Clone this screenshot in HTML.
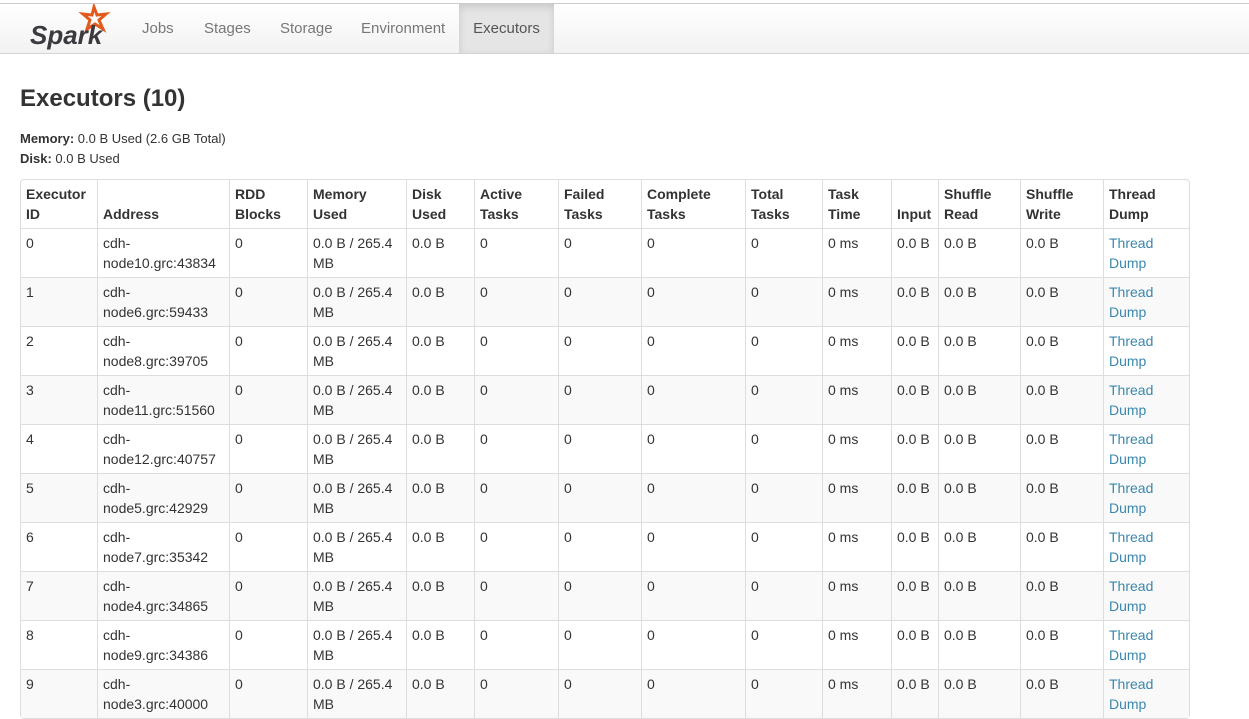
<!DOCTYPE html>
<html><head><meta charset="utf-8"><style>
body{margin:0;font-family:"Liberation Sans",Arial,sans-serif;font-size:14px;line-height:20px;color:#333;background:#fff;width:1249px;height:672px;overflow:hidden}
.top{height:3px;background:#fff;border-bottom:1px solid #ccc}
.nav{position:absolute;top:4px;left:0;width:1249px;height:49px;background:linear-gradient(#fff,#f2f2f2);border-bottom:1px solid #d4d4d4}
.nav a{position:absolute;top:1px;height:48px;line-height:48px;color:#777;font-size:15px;text-decoration:none}
.nav .act{top:0;height:49px;line-height:50px;background:#e5e5e5;box-shadow:inset 0 3px 8px rgba(0,0,0,.125);color:#555;text-align:center}
h3{position:absolute;left:20px;top:83px;margin:0;font-size:24px;line-height:32px;font-weight:bold}
.info{position:absolute;left:20px;top:129px;font-size:13px;line-height:20px}
table{position:absolute;left:20px;top:179px;border-collapse:separate;border-spacing:0;table-layout:fixed;width:1168px;border:1px solid #ddd;border-radius:4px}
th,td{padding:4px 5px 4px 5px;border-left:1px solid #ddd;text-align:left;vertical-align:top;overflow:hidden}
th:first-child,td:first-child{border-left:0}
th{vertical-align:bottom;font-weight:bold;height:40px;padding-top:4px;padding-bottom:4px}
td{border-top:1px solid #ddd;height:40px;padding-top:4px}
tr:nth-child(odd) td{background:#f9f9f9}
a.l{color:#3a87ad;text-decoration:none}
</style></head><body>
<div class="top"></div>
<div class="nav">
<svg style="position:absolute;left:28px;top:0px" width="84" height="46" viewBox="0 0 84 46"><path d="M66 3 L69 11 L78 10 L71 16 L75 25 L67 20 L59 25 L62 16 L55 10 L64 11 Z" fill="none" stroke="#e25a1c" stroke-width="3"/><text x="2" y="40" font-family="Liberation Sans,sans-serif" font-style="italic" font-weight="bold" font-size="26" fill="#3c3a3e">Spark</text></svg>
<a style="left:142px">Jobs</a><a style="left:204px">Stages</a><a style="left:280px">Storage</a><a style="left:361px">Environment</a><a class="act" style="left:459px;width:95px">Executors</a>
</div>
<h3>Executors (10)</h3>
<div class="info"><b>Memory:</b> 0.0 B Used (2.6 GB Total)<br><b>Disk:</b> 0.0 B Used</div>
<table>
<colgroup><col style="width:76px"><col style="width:132px"><col style="width:78px"><col style="width:99px"><col style="width:68px"><col style="width:84px"><col style="width:83px"><col style="width:104px"><col style="width:77px"><col style="width:69px"><col style="width:47px"><col style="width:82px"><col style="width:83px"><col style="width:86px"></colgroup>
<tr><th>Executor ID</th><th>Address</th><th>RDD Blocks</th><th>Memory Used</th><th>Disk Used</th><th>Active Tasks</th><th>Failed Tasks</th><th>Complete Tasks</th><th>Total Tasks</th><th>Task Time</th><th>Input</th><th>Shuffle Read</th><th>Shuffle Write</th><th>Thread Dump</th></tr>
<tr><td>0</td><td>cdh-<br>node10.grc:43834</td><td>0</td><td>0.0 B / 265.4 MB</td><td>0.0 B</td><td>0</td><td>0</td><td>0</td><td>0</td><td>0 ms</td><td>0.0 B</td><td>0.0 B</td><td>0.0 B</td><td><a class="l">Thread Dump</a></td></tr>
<tr><td>1</td><td>cdh-<br>node6.grc:59433</td><td>0</td><td>0.0 B / 265.4 MB</td><td>0.0 B</td><td>0</td><td>0</td><td>0</td><td>0</td><td>0 ms</td><td>0.0 B</td><td>0.0 B</td><td>0.0 B</td><td><a class="l">Thread Dump</a></td></tr>
<tr><td>2</td><td>cdh-<br>node8.grc:39705</td><td>0</td><td>0.0 B / 265.4 MB</td><td>0.0 B</td><td>0</td><td>0</td><td>0</td><td>0</td><td>0 ms</td><td>0.0 B</td><td>0.0 B</td><td>0.0 B</td><td><a class="l">Thread Dump</a></td></tr>
<tr><td>3</td><td>cdh-<br>node11.grc:51560</td><td>0</td><td>0.0 B / 265.4 MB</td><td>0.0 B</td><td>0</td><td>0</td><td>0</td><td>0</td><td>0 ms</td><td>0.0 B</td><td>0.0 B</td><td>0.0 B</td><td><a class="l">Thread Dump</a></td></tr>
<tr><td>4</td><td>cdh-<br>node12.grc:40757</td><td>0</td><td>0.0 B / 265.4 MB</td><td>0.0 B</td><td>0</td><td>0</td><td>0</td><td>0</td><td>0 ms</td><td>0.0 B</td><td>0.0 B</td><td>0.0 B</td><td><a class="l">Thread Dump</a></td></tr>
<tr><td>5</td><td>cdh-<br>node5.grc:42929</td><td>0</td><td>0.0 B / 265.4 MB</td><td>0.0 B</td><td>0</td><td>0</td><td>0</td><td>0</td><td>0 ms</td><td>0.0 B</td><td>0.0 B</td><td>0.0 B</td><td><a class="l">Thread Dump</a></td></tr>
<tr><td>6</td><td>cdh-<br>node7.grc:35342</td><td>0</td><td>0.0 B / 265.4 MB</td><td>0.0 B</td><td>0</td><td>0</td><td>0</td><td>0</td><td>0 ms</td><td>0.0 B</td><td>0.0 B</td><td>0.0 B</td><td><a class="l">Thread Dump</a></td></tr>
<tr><td>7</td><td>cdh-<br>node4.grc:34865</td><td>0</td><td>0.0 B / 265.4 MB</td><td>0.0 B</td><td>0</td><td>0</td><td>0</td><td>0</td><td>0 ms</td><td>0.0 B</td><td>0.0 B</td><td>0.0 B</td><td><a class="l">Thread Dump</a></td></tr>
<tr><td>8</td><td>cdh-<br>node9.grc:34386</td><td>0</td><td>0.0 B / 265.4 MB</td><td>0.0 B</td><td>0</td><td>0</td><td>0</td><td>0</td><td>0 ms</td><td>0.0 B</td><td>0.0 B</td><td>0.0 B</td><td><a class="l">Thread Dump</a></td></tr>
<tr><td>9</td><td>cdh-<br>node3.grc:40000</td><td>0</td><td>0.0 B / 265.4 MB</td><td>0.0 B</td><td>0</td><td>0</td><td>0</td><td>0</td><td>0 ms</td><td>0.0 B</td><td>0.0 B</td><td>0.0 B</td><td><a class="l">Thread Dump</a></td></tr>
</table>
</body></html>
